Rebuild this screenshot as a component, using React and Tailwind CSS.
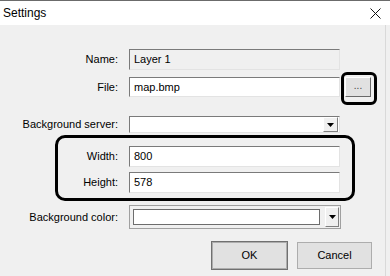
import React from 'react';

const sunken = 'border border-t-[#7a7a7a] border-l-[#7a7a7a] border-b-[#e3e3e3] border-r-[#e3e3e3]';

const Label = ({ children, w = 'w-[119px]' }) => (
  <div className={`${w} shrink-0 text-right pr-[1px]`}>{children}</div>
);

const Arrow = () => (
  <svg width="7" height="4" viewBox="0 0 7 4">
    <path d="M0 0h7L3.5 4z" fill="#000" />
  </svg>
);

export default function App() {
  return (
    <div className="w-[390px] h-[276px] bg-[#f0f0f0] overflow-hidden text-[11px] text-black" style={{ fontFamily: '"Liberation Sans", Arial, sans-serif' }}>
      {/* Title bar */}
      <div className="h-[25px] bg-white border-t border-[#6b6b6b] flex items-center justify-between pl-[3px] pr-[9px]">
        <span className="text-[12px] leading-none">Settings</span>
        <svg width="11" height="11" viewBox="0 0 11 11">
          <path d="M0.5 0.5L10.5 10.5M10.5 0.5L0.5 10.5" stroke="#111" strokeWidth="1" />
        </svg>
      </div>

      <div className="flex flex-col w-[386px] h-[251px] border-r border-[#d9d9d9]">
        {/* Name */}
        <div className="flex items-center gap-[10px] mt-[24px] h-[21px]">
          <Label>Name:</Label>
          <div className={`w-[211px] h-[21px] bg-[#f0f0f0] ${sunken} flex items-center pl-[4px]`}>Layer 1</div>
        </div>

        {/* File */}
        <div className="flex items-center mt-[7px] h-[20px]">
          <Label>File:</Label>
          <div className={`ml-[10px] w-[211px] h-[20px] bg-white ${sunken} flex items-center pl-[4px]`}>map.bmp</div>
          <div className="relative ml-[5px]">
            <div className="w-[26px] h-[20px] bg-[#e1e1e1] border border-t-white border-l-white border-b-[#696969] border-r-[#696969] flex items-center justify-center text-[#444] text-[10px] leading-none pb-[2px]">...</div>
            <div className="absolute -left-[4px] -top-[5px] w-[36px] h-[33px] border-[3px] border-black rounded-[6px] pointer-events-none" />
          </div>
        </div>

        {/* Background server */}
        <div className="flex items-center gap-[10px] mt-[19px] h-[17px]">
          <Label>Background server:</Label>
          <div className={`w-[211px] h-[17px] bg-white ${sunken} flex items-center justify-end pr-[1px]`}>
            <div className="w-[15px] h-[15px] bg-[#f0f0f0] border border-t-white border-l-white border-b-[#808080] border-r-[#808080] flex items-center justify-center">
              <Arrow />
            </div>
          </div>
        </div>

        {/* Size group */}
        <div className="mt-[2px] ml-[55px] w-[300px] h-[66px] border-[3px] border-black rounded-[10px] flex flex-col pt-[8px]">
          <div className="flex items-center gap-[10px] h-[21px]">
            <Label w="w-[61px]">Width:</Label>
            <div className={`w-[211px] h-[21px] bg-white ${sunken} flex items-center pl-[4px]`}>800</div>
          </div>
          <div className="flex items-center gap-[10px] h-[21px] mt-[5px]">
            <Label w="w-[61px]">Height:</Label>
            <div className={`w-[211px] h-[21px] bg-white ${sunken} flex items-center pl-[4px]`}>578</div>
          </div>
        </div>

        {/* Background color */}
        <div className="flex items-center gap-[10px] mt-[4px] h-[24px]">
          <Label>Background color:</Label>
          <div className="w-[212px] h-[24px] border border-[#a0a0a0] flex items-center pl-[3px] pr-[1px] gap-[5px]">
            <div className="w-[188px] h-[16px] bg-white border border-[#6d6d6d]" />
            <div className="w-[14px] h-[20px] bg-[#f0f0f0] border border-t-white border-l-white border-b-[#808080] border-r-[#808080] flex items-center justify-center">
              <Arrow />
            </div>
          </div>
        </div>

        {/* Buttons */}
        <div className="flex mt-[13px] pl-[212px] gap-[10px]">
          <button className="w-[75px] h-[27px] bg-[#e1e1e1] border border-[#adadad] outline outline-1 outline-[#707070] text-[11px]">OK</button>
          <button className="w-[75px] h-[27px] bg-[#e1e1e1] border border-[#adadad] text-[11px]">Cancel</button>
        </div>
      </div>
    </div>
  );
}
